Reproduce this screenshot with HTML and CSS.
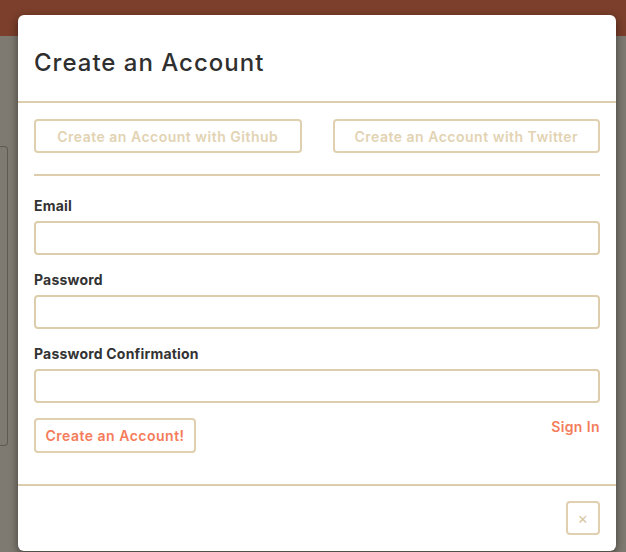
FILE: index.html
```html
<!DOCTYPE html>
<html>
<head>
<meta charset="utf-8">
<link rel="stylesheet" href="styles.css">
</head>
<body>
<div class="page">
  <div class="topbar"></div>
  <div class="content">
    <div class="bg-card"></div>
  </div>
</div>
<div class="modal">
  <div class="modal-header">
    <h2 class="modal-title">Create an Account</h2>
  </div>
  <div class="modal-body">
    <div class="social">
      <button class="btn btn-social">Create an Account with Github</button>
      <button class="btn btn-social">Create an Account with Twitter</button>
    </div>
    <hr class="divider">
    <form class="form">
      <label class="field">
        <span class="label">Email</span>
        <input class="input" type="email">
      </label>
      <label class="field">
        <span class="label">Password</span>
        <input class="input" type="password">
      </label>
      <label class="field">
        <span class="label">Password Confirmation</span>
        <input class="input" type="password">
      </label>
      <div class="actions">
        <button type="button" class="btn btn-primary">Create an Account!</button>
        <a class="signin" href="#">Sign In</a>
      </div>
    </form>
  </div>
  <div class="modal-footer">
    <button class="btn btn-close">×</button>
  </div>
</div>
</body>
</html>
```

FILE: styles.css
```css
* { box-sizing: border-box; }
html, body { margin: 0; padding: 0; }
body {
  width: 626px;
  height: 552px;
  overflow: hidden;
  background: #7e7a71;
  font-family: Inter, "Noto Sans", sans-serif;
  position: relative;
}
.topbar {
  height: 36px;
  background: #7b3f2b;
}
.content {
  padding: 110px 0 0 0;
}
.bg-card {
  width: 8px;
  height: 300px;
  border: 1px solid #5e5a51;
  border-left: none;
  border-radius: 0 4px 4px 0;
}
.modal {
  position: absolute;
  left: 18px;
  top: 15px;
  width: 598px;
  height: 536px;
  background: #fff;
  border-radius: 6px;
  box-shadow: 0 3px 9px rgba(0, 0, 0, 0.5);
  display: flex;
  flex-direction: column;
}
.modal-header {
  height: 88px;
  padding: 9px 16px 0;
  border-bottom: 2px solid #ddcdac;
  display: flex;
  align-items: center;
}
.modal-title {
  margin: 0;
  font-size: 24px;
  font-weight: 500;
  color: #2f2f2f;
  line-height: 30px;
  letter-spacing: 1px;
}
.modal-body {
  padding: 16px 16px 31px;
  border-bottom: 2px solid #ddcdac;
}
.social {
  display: grid;
  grid-template-columns: 1fr 1fr;
  column-gap: 31px;
}
.btn {
  font-family: inherit;
  background: #fff;
  border: 2px solid #e0d0b0;
  border-radius: 4px;
  font-size: 14px;
  font-weight: 600;
  letter-spacing: 0.5px;
  cursor: pointer;
}
.btn-social {
  height: 34px;
  color: #e2d3b3;
  padding: 0;
}
.divider {
  margin: 21px 0 0;
  border: none;
  border-top: 2px solid #ddcdac;
  height: 0;
}
.form {
  display: flex;
  flex-direction: column;
  margin-top: 20px;
}
.field {
  display: flex;
  flex-direction: column;
  gap: 5px;
  margin-bottom: 15px;
}
.label {
  font-size: 14px;
  font-weight: 700;
  color: #333;
  line-height: 20px;
  letter-spacing: 0.2px;
}
.input {
  height: 34px;
  border: 2px solid #ddcdac;
  border-radius: 4px;
  background: #fff;
  font-family: inherit;
  font-size: 14px;
}
.actions {
  display: flex;
  justify-content: space-between;
  align-items: flex-start;
}
.btn-primary {
  height: 35px;
  width: 162px;
  color: #f47c5a;
  padding: 0;
}
.signin {
  color: #f47c5a;
  font-size: 14px;
  font-weight: 600;
  text-decoration: none;
  letter-spacing: 0.4px;
  margin-top: 0;
}
.modal-footer {
  padding: 15px 16px;
  display: flex;
  justify-content: flex-end;
}
.btn-close {
  width: 34px;
  height: 34px;
  color: #d7c6a3;
  font-size: 16px;
  padding: 0;
  font-weight: 400;
}
```
